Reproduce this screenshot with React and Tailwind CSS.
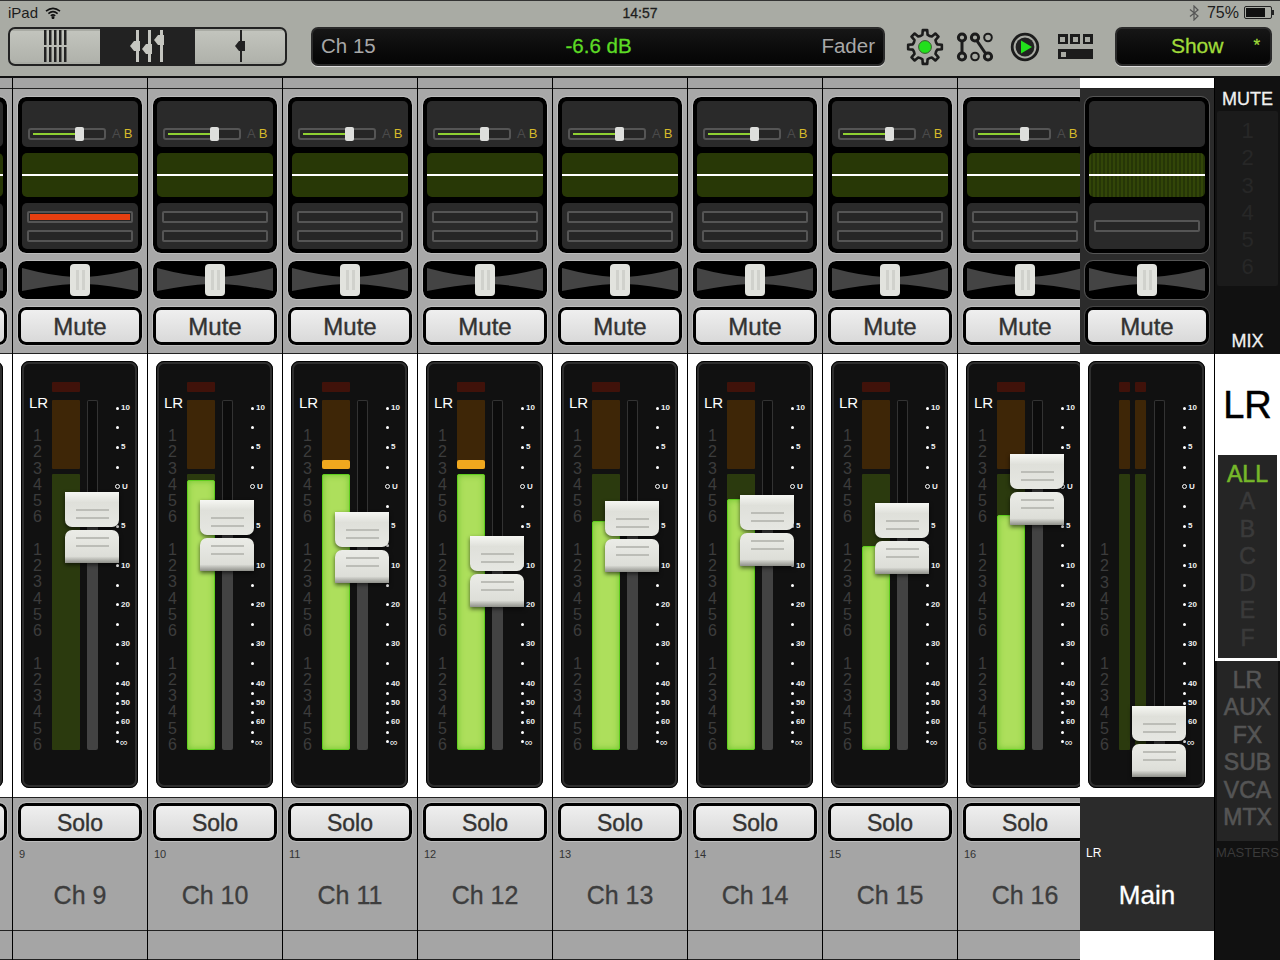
import React from "react";

const FONT = "font-['Liberation_Sans',Arial,sans-serif]";

function Cap({ lower }) {
  return (
    <div
      className={
        lower
          ? "relative h-[33px] w-[54px] rounded-t-[7px] bg-gradient-to-b from-[#ebece7] via-[#dddeD8] via-80% to-[#8f908a]"
          : "relative h-[35px] w-[54px] rounded-b-[7px] bg-gradient-to-b from-[#f6f7f3] via-[#dfe0da] via-30% to-[#e6e7e2]"
      }
    >
      <div className={`absolute left-[11px] right-[10px] flex flex-col gap-[6px] ${lower ? "top-[7px]" : "top-[17px]"}`}>
        <div className="h-[2px] bg-[#bcbdb7]" />
        <div className="h-[2px] bg-[#bcbdb7]" />
      </div>
    </div>
  );
}

function Fader({ y }) {
  return (
    <div
      className="absolute left-[41px] flex flex-col gap-[3px] drop-shadow-[0_2px_2px_rgba(0,0,0,0.6)]"
      style={{ top: y - 364 }}
    >
      <Cap />
      <Cap lower />
    </div>
  );
}

function Numbers() {
  return (
    <div className="flex flex-col">
      {[1, 2, 3, 4, 5, 6].map((n) => (
        <div key={n} className="h-[16.3px] leading-[16.3px]">
          {n}
        </div>
      ))}
    </div>
  );
}

const TICKS = [
  ["10", 0], ["", 0], ["5", 0], ["", 0], ["U", 0], ["", 0], ["5", 0], ["", 0], ["10", 0], ["", 0],
  ["20", 0], ["", 0], ["30", 0], ["", 0], ["40", 1], ["", 1], ["50", 1], ["", 1], ["60", 1], ["", 1], ["∞", 1],
];

function Scale() {
  return (
    <div className="flex w-[26px] flex-col pt-[40px]">
      {TICKS.map(([t, short], i) => (
        <div key={i} className={short ? "h-[9.7px]" : "h-[19.7px]"}>
          <div className="flex h-[8px] items-center">
            {t === "U" ? (
              <div className="h-[5px] w-[5px] rounded-full border border-white" />
            ) : (
              <div className="ml-[1px] h-[3px] w-[3px] rounded-full bg-white" />
            )}
            {t === "∞" ? (
              <span className="ml-[1px] text-[11px] leading-[8px] text-[#f0f0f0]">{t}</span>
            ) : (
              <span className="ml-[2px] text-[8px] font-bold leading-[8px] text-[#f0f0f0]">{t}</span>
            )}
          </div>
        </div>
      ))}
    </div>
  );
}

function MeterBar({ wide, fill, over }) {
  const w = wide ? "w-[28px]" : "w-[11px]";
  return (
    <div className={`relative ${w} h-full`}>
      <div className="absolute inset-x-0 top-[18px] h-[10px] rounded-[1px] bg-[#40120a]" />
      <div className="absolute inset-x-0 top-[36px] h-[69px] rounded-[1px] bg-[#3e2607]" />
      <div className="absolute inset-x-0 top-[110px] h-[276px] rounded-[1px] bg-[#2b3a0e]" />
      {over && <div className="absolute inset-x-0 top-[96px] h-[9px] rounded-[2px] bg-[#f0a81e]" />}
      {fill && (
        <div
          className="absolute inset-x-0 bottom-[35px] rounded-[2px] border border-[#5fcf1e] bg-[#addf5c] shadow-[inset_0_0_6px_rgba(110,195,45,0.95)]"
          style={{ top: fill - 364 }}
        />
      )}
    </div>
  );
}

function MeterPanel({ fill, over, y, main, bare }) {
  const split = y + 30 - 400;
  return (
    <div className="relative flex h-[427px] w-[117px] shrink-0 rounded-[8px] border-[3px] border-[#2e2e2e] bg-[#111] outline outline-1 -outline-offset-1 outline-black">
      {!main && !bare && <div className="absolute left-[5px] top-[31px] text-[15px] leading-[16px] text-white">LR</div>}
      {!bare && (
        <div className="absolute left-[9px] top-[64px] flex flex-col text-[16px] text-[#3c3c3c]">
          {main ? <div className="h-[114px]" /> : <Numbers />}
          <div className={main ? "" : "mt-[16px]"}><Numbers /></div>
          <div className="mt-[16px]"><Numbers /></div>
        </div>
      )}
      <div className="ml-[28px] flex h-full gap-[5px]">
        {main ? (
          <>
            <MeterBar />
            <MeterBar />
          </>
        ) : (
          <MeterBar wide fill={fill} over={over} />
        )}
      </div>
      <div className="absolute left-[63px] top-[36px] flex h-[350px] w-[11px] flex-col">
        <div className="rounded-t-[2px] border border-b-0 border-[#333] bg-[#0c0c0c]" style={{ height: split }} />
        <div className="flex-1 rounded-b-[2px] bg-[#434343]" />
      </div>
      {!bare && (
        <div className="absolute left-[91px] top-0 h-full">
          <Scale />
        </div>
      )}
      <Fader y={y} />
    </div>
  );
}

function Bowtie() {
  return (
    <svg width="116" height="32" viewBox="0 0 116 32" className="absolute left-[4px] top-[3px]">
      <path d="M0 4 Q30 12 52 13 H64 Q86 12 116 4 V27 Q86 21 64 20 H52 Q30 21 0 27 Z" fill="#444" />
    </svg>
  );
}

function Pan({ main }) {
  return (
    <div className={`relative h-[38px] w-[124px] rounded-[8px] bg-black outline outline-1 ${main ? "outline-[#555]" : "outline-[#bbb]"}`}>
      <Bowtie />
      <div className="absolute left-[52px] top-[3px] flex h-[32px] w-[20px] justify-center gap-[3px] rounded-[4px] bg-[#e2e3de] pt-[6px]">
        <div className="h-[20px] w-[3px] bg-[#d0d1cc]" />
        <div className="h-[20px] w-[3px] bg-[#d0d1cc]" />
      </div>
    </div>
  );
}

function RoundBtn({ label, main, small }) {
  return (
    <div
      className={`flex h-[38px] w-[124px] shrink-0 items-center justify-center rounded-[8px] border-[3px] border-black bg-gradient-to-b from-[#efefef] to-[#d9d9d9] pt-[2px] leading-none text-[#333] outline outline-1 [-webkit-text-stroke:0.4px_#333] ${small ? "text-[23px]" : "text-[24px]"} ${main ? "outline-[#444]" : "outline-[#bdbdbd]"}`}
    >
      {label}
    </div>
  );
}

function TopPanels({ red, main, bare }) {
  return (
    <div className={`flex h-[156px] w-[124px] flex-col gap-[6px] rounded-[8px] bg-black p-[4px] outline outline-1 ${main ? "outline-[#555]" : "outline-[#bbb]"}`}>
      <div className="relative flex h-[46px] items-end rounded-[5px] bg-[#2a2a2a] px-[6px] pb-[7px]">
        {!main && !bare && (
          <>
            <div className="relative h-[12px] w-[78px] shrink-0 rounded-[3px] border-2 border-[#555] bg-[#262626]">
              <div className="absolute left-[3px] top-[3px] h-[2px] w-[42px] bg-[#8fd032]" />
              <div className="absolute left-[45px] top-[-3px] h-[14px] w-[9px] rounded-[2px] bg-[#dddedc]" />
            </div>
            <div className="ml-[6px] text-[13px] leading-[12px] text-[#4a4a4a]">A</div>
            <div className="ml-[3px] text-[13px] leading-[12px] text-[#d6b92a]">B</div>
          </>
        )}
      </div>
      <div
        className={`relative h-[44px] rounded-[5px] ${main ? "bg-[repeating-linear-gradient(90deg,#324608_0,#324608_2px,#263607_2px,#263607_4px)]" : "bg-[#283806]"}`}
      >
        <div className="absolute inset-x-0 top-[21px] h-[2px] bg-white" />
      </div>
      <div className="flex h-[46px] flex-col justify-center gap-[7px] rounded-[5px] bg-[#2a2a2a] px-[5px]">
        <div className="h-[12px] rounded-[2px] border-2 border-[#555] bg-[#262626] p-[1px]">
          {red && <div className="h-full bg-[#e83f10]" />}
        </div>
        {!main && <div className="h-[12px] rounded-[2px] border-2 border-[#555] bg-[#262626]" />}
      </div>
    </div>
  );
}

function Strip({ num, name, fill, over, y, red, bare, width = "w-[135px]", border = true }) {
  return (
    <div className={`flex ${width} shrink-0 flex-col overflow-hidden ${border ? "border-r border-black" : ""}`}>
      <div className="box-content h-[10px] w-[134px] shrink-0 border-b border-[#222] bg-[#a4a4a4]" />
      <div className="flex h-[264px] w-[134px] shrink-0 flex-col bg-[#a8a8a8] px-[5px] pt-[8px]">
        <TopPanels red={red} bare={bare} />
        <div className="mt-[8px]"><Pan /></div>
        <div className="mt-[8px]"><RoundBtn label={bare ? "" : "Mute"} /></div>
      </div>
      <div className="box-content h-[436px] w-[126px] shrink-0 border-y border-[#222] bg-white pl-[8px] pt-[7px]">
        <MeterPanel fill={fill} over={over} y={y} bare={bare} />
      </div>
      <div className="flex h-[132px] w-[134px] shrink-0 flex-col bg-[#a5a5a5] px-[5px] pt-[5px]">
        <RoundBtn label={bare ? "" : "Solo"} small />
        <div className="mt-[6px] h-[14px] pl-[1px] text-[11px] leading-[14px] text-[#333]">{num}</div>
        <div className="mt-[20px] text-center text-[25px] leading-[28px] text-[#3d3d3d] [-webkit-text-stroke:0.3px_#3d3d3d]">{name}</div>
      </div>
      <div className="h-[30px] w-[134px] shrink-0 border-y border-[#222] bg-[#a5a5a5]" />
    </div>
  );
}

function MainStrip() {
  return (
    <div className="flex w-[134px] shrink-0 flex-col">
      <div className="h-[10px] shrink-0 bg-white" />
      <div className="flex h-[265px] shrink-0 flex-col border-t border-[#222] bg-[#2b2b2b] px-[5px] pt-[8px]">
        <TopPanels main />
        <div className="mt-[8px]"><Pan main /></div>
        <div className="mt-[8px]"><RoundBtn label="Mute" main /></div>
      </div>
      <div className="box-content h-[436px] shrink-0 border-y border-[#222] bg-white pl-[8px] pt-[7px]">
        <MeterPanel y={706} main />
      </div>
      <div className="flex h-[132px] shrink-0 flex-col bg-[#2b2b2b] px-[6px] pt-[48px]">
        <div className="h-[14px] text-[12px] leading-[14px] text-white">LR</div>
        <div className="mt-[21px] text-center text-[26px] leading-[28px] text-white [-webkit-text-stroke:0.3px_#fff]">Main</div>
      </div>
      <div className="flex-1 border-t border-[#222] bg-white" />
    </div>
  );
}

function Sidebar() {
  return (
    <div className="flex w-[66px] shrink-0 flex-col border-l border-black bg-[#111]">
      <div className="mt-[11px] text-center text-[18px] leading-[20px] text-[#f0f0f0] [-webkit-text-stroke:0.3px_#f0f0f0]">MUTE</div>
      <div className="ml-[2px] mr-[2px] mt-[2px] flex h-[175px] flex-col items-center rounded-[2px] bg-[#1b1b1b] pt-[6px] text-[22px] leading-[27.3px] text-[#272727]">
        {[1, 2, 3, 4, 5, 6].map((n) => <div key={n}>{n}</div>)}
      </div>
      <div className="mt-[45px] h-[21px] text-center text-[18px] leading-[20px] text-[#f0f0f0] [-webkit-text-stroke:0.3px_#f0f0f0]">MIX</div>
      <div className="mt-[2px] flex h-[101px] items-center justify-center bg-white text-[38px] leading-none text-black [-webkit-text-stroke:0.5px_#000]">LR</div>
      <div className="flex h-[206px] flex-col items-center border-[3px] border-t-0 border-white bg-[#252525] text-[23px] leading-[27.3px] text-[#3a3a3a] [-webkit-text-stroke:0.6px_#3a3a3a]">
        <div className="mt-[6px] text-[#76b82a] [-webkit-text-stroke:0.6px_#76b82a]">ALL</div>
        {["A", "B", "C", "D", "E", "F"].map((n) => <div key={n}>{n}</div>)}
      </div>
      <div className="ml-[2px] mr-[2px] flex h-[180px] flex-col items-center bg-[#252525] pt-[6px] text-[23px] leading-[27.4px] text-[#555] [-webkit-text-stroke:0.6px_#555]">
        {["LR", "AUX", "FX", "SUB", "VCA", "MTX"].map((n) => <div key={n}>{n}</div>)}
      </div>
      <div className="mt-[4px] text-center text-[13px] leading-[16px] text-[#3a3a3a]">MASTERS</div>
    </div>
  );
}

function SegIcons1() {
  return (
    <svg width="24" height="34" viewBox="0 0 24 34">
      {[0, 5, 10, 15, 20].map((x) => (
        <g key={x} fill="#222">
          <rect x={x + 1} y="1" width="2.5" height="15" />
          <rect x={x + 1} y="18" width="2.5" height="15" />
        </g>
      ))}
    </svg>
  );
}

function SegIcons2() {
  return (
    <svg width="38" height="34" viewBox="0 0 38 34" fill="#c5c6c0">
      <rect x="7" y="1" width="3" height="32" />
      <path d="M1 17 L5 12 H11 V22 H5 Z" />
      <rect x="19" y="1" width="3" height="32" />
      <path d="M13 20 L17 15 H23 V25 H17 Z" />
      <rect x="31" y="1" width="3" height="32" />
      <path d="M25 11 L29 6 H35 V16 H29 Z" />
    </svg>
  );
}

function SegIcons3() {
  return (
    <svg width="12" height="34" viewBox="0 0 12 34" fill="#222">
      <rect x="6" y="1" width="2" height="32" />
      <path d="M1 17 L5 12 H11 V22 H5 Z" />
    </svg>
  );
}

function gearPath() {
  const c = 20;
  const pt = (r, deg) => {
    const a = ((deg - 90) * Math.PI) / 180;
    return `${(c + r * Math.cos(a)).toFixed(2)} ${(c + r * Math.sin(a)).toFixed(2)}`;
  };
  let d = "";
  for (let i = 0; i < 8; i++) {
    const a = i * 45;
    d += `${i === 0 ? "M" : "L"}${pt(12.5, a - 12)} L${pt(17, a - 7.5)} L${pt(17, a + 7.5)} L${pt(12.5, a + 12)} `;
    d += `Q${pt(11.6, a + 22.5)} ${pt(12.5, a + 33)} `;
  }
  return d + "Z";
}

function Gear() {
  return (
    <svg width="40" height="40" viewBox="0 0 40 40">
      <path d={gearPath()} fill="none" stroke="#1c1c1c" strokeWidth="2.6" strokeLinejoin="round" />
      <circle cx="20" cy="20" r="6.4" fill="#22e01c" stroke="#3a5a30" strokeWidth="1" />
    </svg>
  );
}

function Routing() {
  return (
    <svg width="40" height="34" viewBox="0 0 40 34">
      <g stroke="#1c1c1c" strokeWidth="3" fill="none">
        <path d="M7 8 V26" />
        <path d="M20 8 L33 27" />
        <circle cx="7" cy="7.5" r="3.6" fill="#a9aba4" />
        <circle cx="20" cy="7.5" r="3.6" fill="#a9aba4" />
        <circle cx="33" cy="7.5" r="3.8" fill="#a9aba4" strokeWidth="2" />
        <circle cx="7" cy="26.5" r="3.6" fill="#a9aba4" />
        <circle cx="20" cy="26.5" r="3.8" fill="#a9aba4" strokeWidth="2" />
        <circle cx="33" cy="26.5" r="3.6" fill="#a9aba4" />
      </g>
    </svg>
  );
}

function Play() {
  return (
    <svg width="30" height="30" viewBox="0 0 30 30">
      <circle cx="15" cy="15" r="12.8" fill="none" stroke="#1c1c1c" strokeWidth="2.8" />
      <circle cx="15" cy="15" r="9.4" fill="#222" />
      <path d="M11 8.5 L22 15 L11 21.5 Z" fill="#22e01c" />
    </svg>
  );
}

function GridIcon() {
  return (
    <div className="flex w-[35px] flex-col gap-[5px]">
      <div className="flex justify-between">
        {[0, 1, 2].map((i) => (
          <div key={i} className="flex h-[10px] w-[10px] items-center justify-center bg-[#1c1c1c]">
            <div className="h-[5px] w-[5px] bg-[#a9aba4]" />
          </div>
        ))}
      </div>
      <div className="flex h-[10px] items-center bg-[#1c1c1c] pl-[3px]">
        <div className="h-[5px] w-[5px] bg-[#a9aba4]" />
      </div>
    </div>
  );
}

function Wifi() {
  return (
    <svg width="16" height="12" viewBox="0 0 16 12" fill="none" stroke="#111" strokeWidth="1.6">
      <path d="M1 4.2 Q8 -1.4 15 4.2" />
      <path d="M3.4 6.6 Q8 2.8 12.6 6.6" />
      <path d="M5.8 8.8 Q8 7 10.2 8.8" />
      <circle cx="8" cy="10.6" r="0.7" fill="#111" />
    </svg>
  );
}

function Header() {
  return (
    <div className="h-[76px] shrink-0 border-t border-[#333] bg-[#a9aba4]">
      <div className="grid h-[25px] grid-cols-[1fr_auto_1fr] items-center pb-[2px] text-[15px] leading-none text-[#1c1c1c]">
        <div className="flex items-center pl-[8px]">
          <span>iPad</span>
          <span className="ml-[7px]"><Wifi /></span>
        </div>
        <span className="text-[14px] [-webkit-text-stroke:0.3px_#222]">14:57</span>
        <div className="flex items-center justify-end">
          <svg width="10" height="16" viewBox="0 0 10 16" fill="none" stroke="#555" strokeWidth="1.2" className="mr-[8px]">
            <path d="M1 4.5 L9 11 L5 15 V1 L9 5 L1 11.5" />
          </svg>
          <span className="text-[16px]">75%</span>
          <div className="ml-[5px] flex h-[13px] w-[28px] items-center rounded-[2px] border border-[#222] p-[1px]">
            <div className="h-full w-[19px] bg-[#111]" />
          </div>
          <div className="mr-[6px] h-[5px] w-[2px] bg-[#222]" />
        </div>
      </div>
      <div className="flex h-[40px] items-center pl-[8px]">
        <div className="flex h-[39px] w-[279px] overflow-hidden rounded-[7px] border-2 border-[#222] bg-[#222]">
          <div className="flex w-[90px] items-center justify-center border-y-2 border-[#a9aba4] bg-gradient-to-b from-[#c2c4bd] to-[#b0b2ab]"><SegIcons1 /></div>
          <div className="flex w-[95px] items-center justify-center bg-[#222]"><SegIcons2 /></div>
          <div className="flex flex-1 items-center justify-center border-y-2 border-[#a9aba4] bg-gradient-to-b from-[#c2c4bd] to-[#b0b2ab]"><SegIcons3 /></div>
        </div>
        <div className="ml-[24px] flex h-[39px] w-[574px] items-center justify-between rounded-[7px] border-2 border-[#2a2a2a] bg-gradient-to-b from-[#161616] to-[#050505] px-[8px] text-[20.5px] text-[#a8a8a8] shadow-[0_1px_0_#ddd]">
          <span>Ch 15</span>
          <span className="text-[#5ddc25] [-webkit-text-stroke:0.3px_#5ddc25]">-6.6 dB</span>
          <span>Fader</span>
        </div>
        <div className="flex w-[230px] items-center pl-[20px] pt-[1px]">
          <div className="flex w-[40px] justify-center"><Gear /></div>
          <div className="ml-[10px] flex w-[40px] justify-center"><Routing /></div>
          <div className="ml-[10px] flex w-[40px] justify-center"><Play /></div>
          <div className="ml-[10px] flex w-[40px] justify-center"><GridIcon /></div>
        </div>
        <div className="flex h-[39px] w-[157px] items-center rounded-[7px] border-2 border-[#2a2a2a] bg-gradient-to-b from-[#161616] to-[#050505] text-[21px] text-[#a0dc3a] shadow-[0_1px_0_#ddd] [-webkit-text-stroke:0.3px_#a0dc3a]">
          <span className="flex-1 pl-[24px] text-center">Show</span>
          <span className="pr-[10px] text-[17px]">*</span>
        </div>
      </div>
    </div>
  );
}

const CH = [
  { num: 9, name: "Ch 9", y: 492, red: true },
  { num: 10, name: "Ch 10", y: 500, fill: 480 },
  { num: 11, name: "Ch 11", y: 512, fill: 474, over: true },
  { num: 12, name: "Ch 12", y: 536, fill: 474, over: true },
  { num: 13, name: "Ch 13", y: 501, fill: 521 },
  { num: 14, name: "Ch 14", y: 495, fill: 499 },
  { num: 15, name: "Ch 15", y: 503, fill: 546 },
];

export default function App() {
  return (
    <div className={`flex h-[960px] w-[1280px] flex-col overflow-hidden bg-[#a9aba4] ${FONT}`}>
      <Header />
      <div className="h-[2px] shrink-0 bg-[#111]" />
      <div className="flex min-h-0 flex-1">
        <div className="flex w-[13px] shrink-0 justify-end overflow-hidden">
          <div className="shrink-0">
            <Strip bare y={520} fill={520} />
          </div>
        </div>
        {CH.map((c) => <Strip key={c.num} {...c} />)}
        <Strip num={16} name="Ch 16" y={454} fill={515} width="w-[122px]" border={false} />
        <MainStrip />
        <Sidebar />
      </div>
    </div>
  );
}
